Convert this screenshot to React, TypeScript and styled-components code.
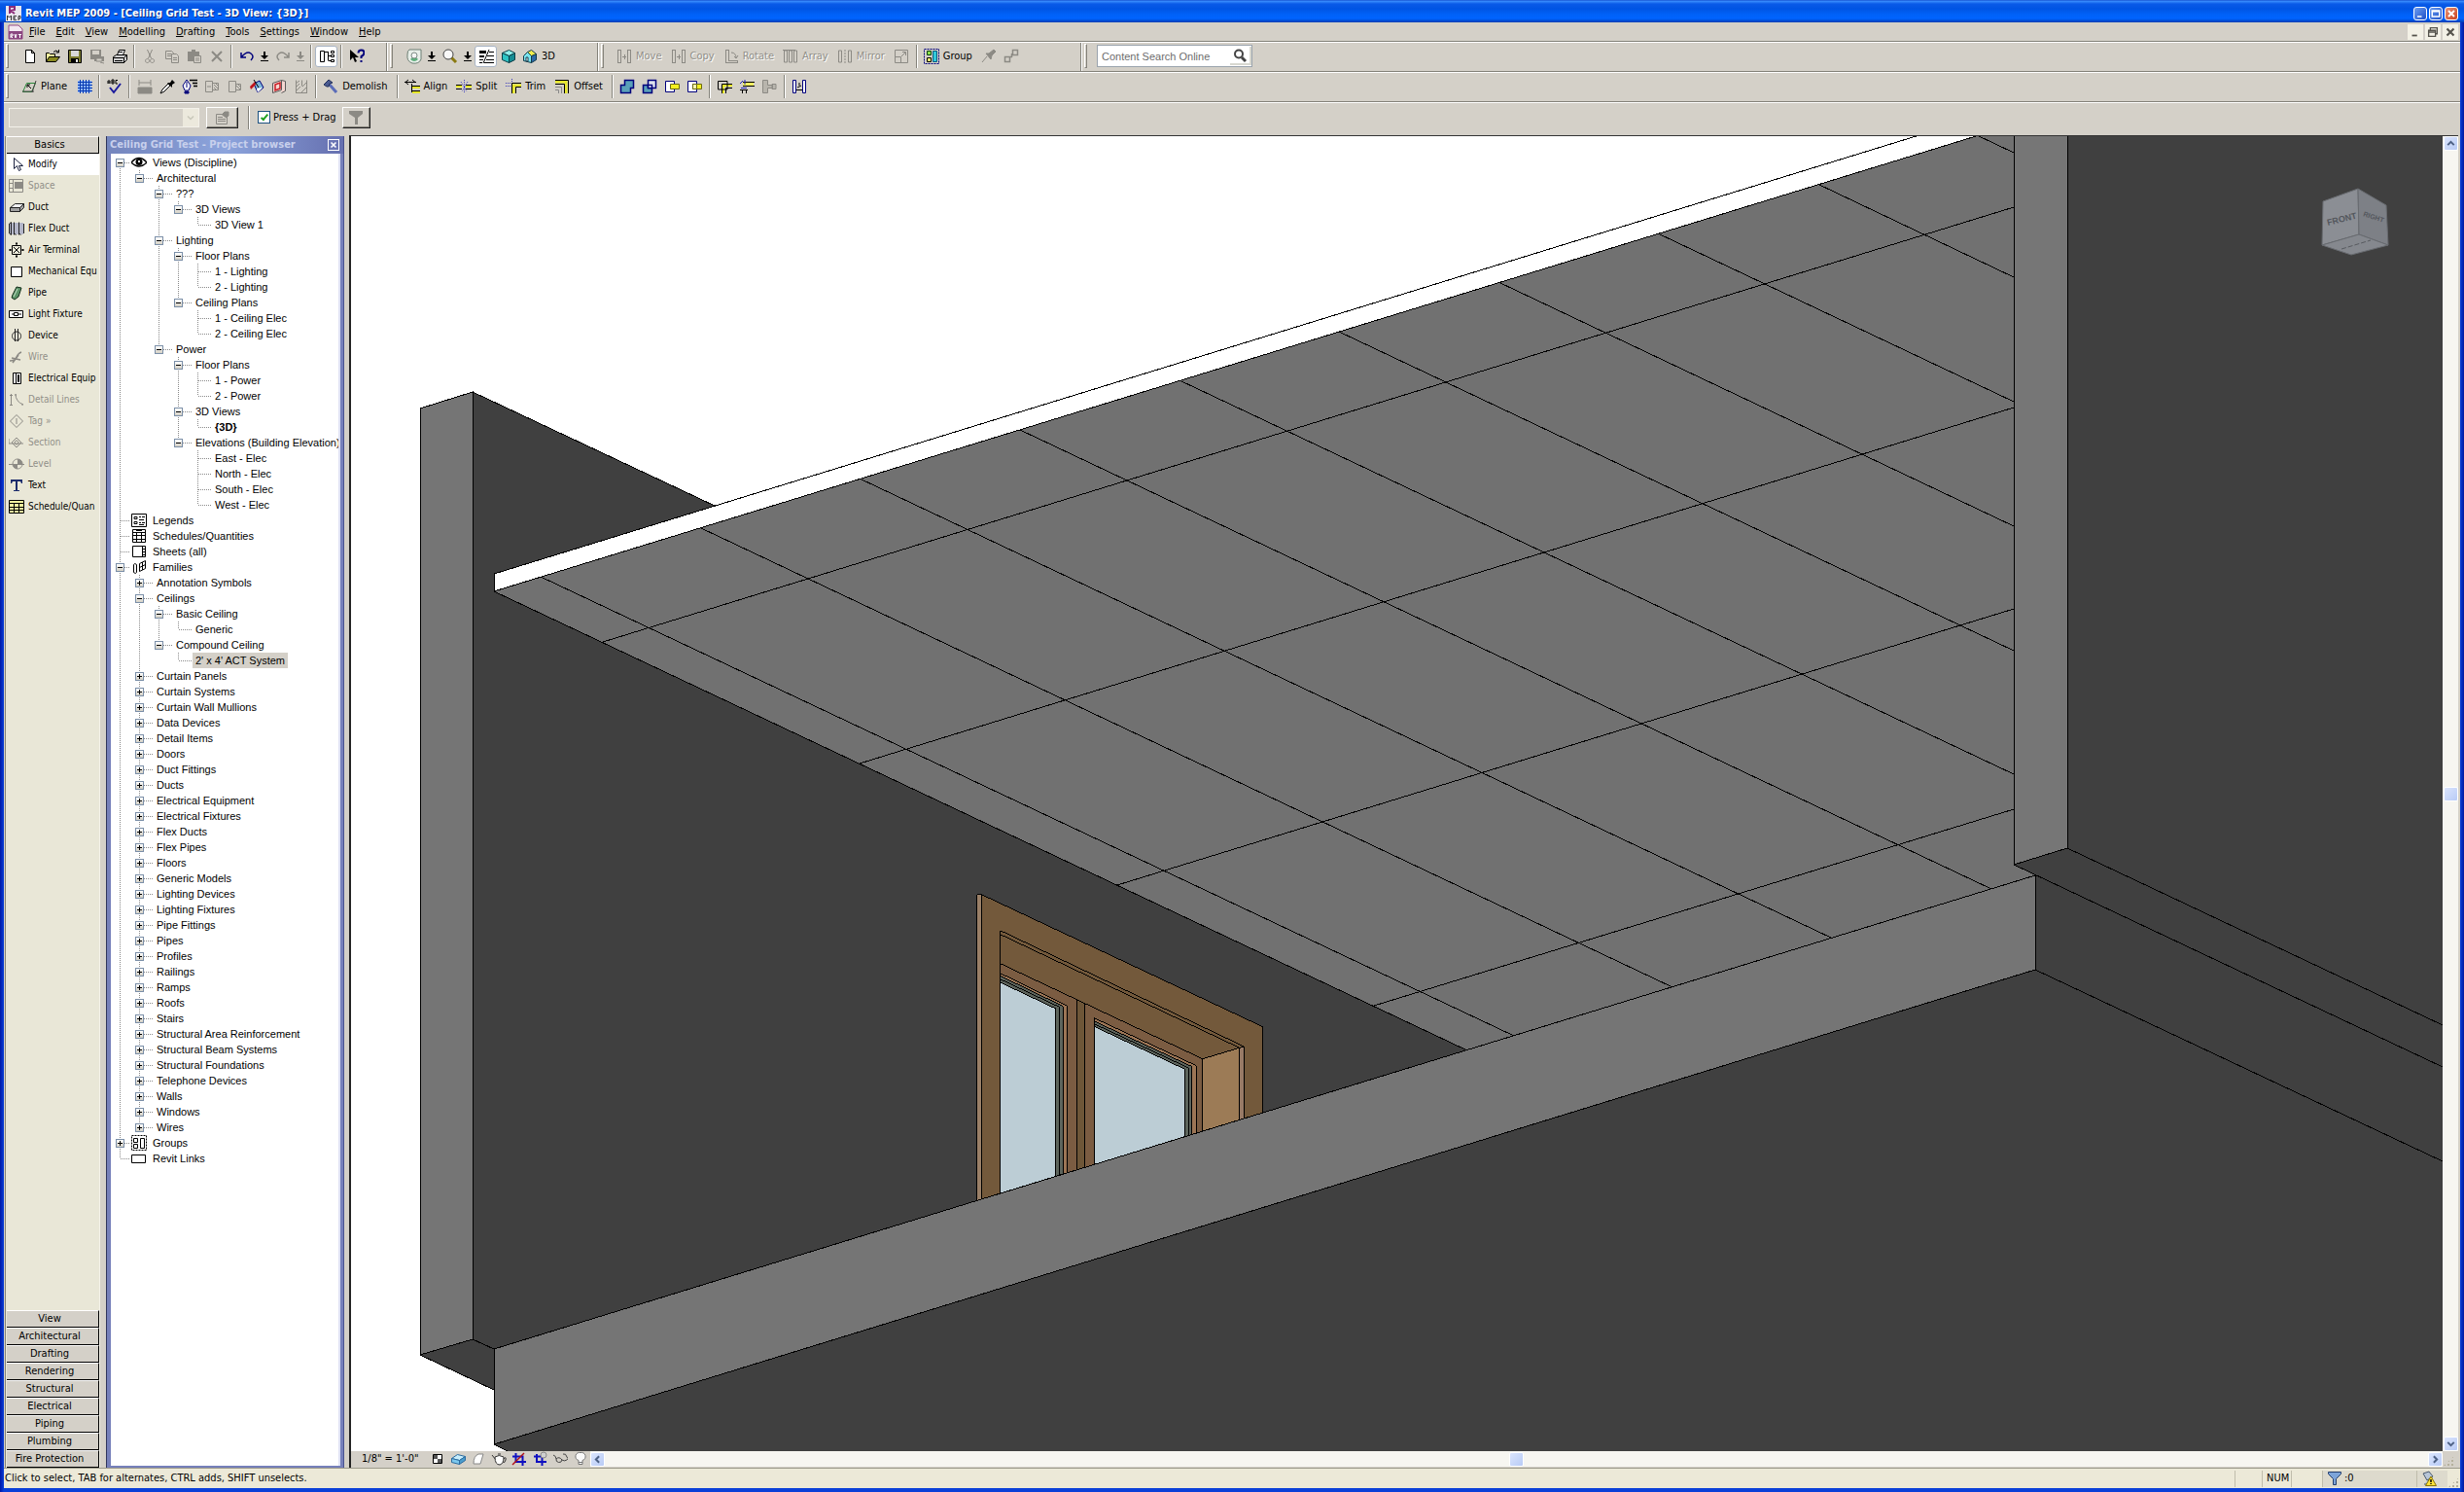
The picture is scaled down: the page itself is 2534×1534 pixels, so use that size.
import React from 'react';
import styled, { createGlobalStyle, css } from 'styled-components';

const face = '#d4d0c8';
const cream = '#ece9d8';
const uiFont = '"DejaVu Sans Condensed", "DejaVu Sans", Tahoma, sans-serif';
const treeFont = '"Liberation Sans", Arial, sans-serif';

const GlobalStyle = createGlobalStyle`
  *, *::before, *::after { box-sizing: border-box; }
  html, body, #root { height: 100%; margin: 0; }
  body { font: 11px/16px ${uiFont}; color: #000; overflow: hidden; background: #0a1a6a; }
  button, input, select { font: inherit; color: inherit; margin: 0; padding: 0; border: 0; border-radius: 0; background: none; }
  ul { list-style: none; margin: 0; padding: 0; }
  svg { display: block; flex: none; }
`;

/* ---------- icons ---------- */

const G = '#8c8a84';
const N = '#00007b';

const Move = (
  <g fill="none" stroke={G}>
    <path d="M1.5 1v13M4.5 1v13M1 1.5h4M1 14.5h4M11.5 1v13M14.5 1v13M11 1.5h4M11 14.5h4M6 8.5h4M8.5 6v5" />
  </g>
);
const Drop = <path fill="#000" d="M7 3h2v4h3L8 11 4 7h3zM4 12h8v1H4z" />;
const DropOff = <path fill={G} d="M7 3h2v4h3L8 11 4 7h3zM4 12h8v1H4z" />;

const icons: Record<string, React.ReactNode> = {
  mep: (
    <>
      <rect width="16" height="16" fill="#e9e6ee" />
      <path d="M4 8V1h5v3l-4 1 4 3" fill="none" stroke="#8b2d7a" strokeWidth="2" />
      <path d="M0 9h16v7H0z" fill="#e9e6ee" />
      <path d="M1.500 15v-5l2 2 2-2v5M11 10.500H8v4h3M8 12.500h2M13 15v-4.500h2v2.500h-2" fill="none" stroke="#333" />
    </>
  ),
  rvt: (
    <>
      <path d="M1 1h10l4 4v10H1z" fill="#f3e8f1" stroke="#9a4d8b" />
      <path d="M1 7h14v8H1z" fill="#8b4780" />
      <path d="M3 14v-4h2v2H3l2 2M7 10l1 4 1-4M11 10.500h3M12.500 10v4" fill="none" stroke="#fff" />
    </>
  ),
  fresh: <path d="M3.500 1.500h6l3 3v10h-9zM9.500 1.500v3h3" fill="#fff" stroke="#000" />,
  open: (
    <>
      <path d="M1.500 13.500v-9h3l1 1h5v3" fill="#fbf7a0" stroke="#000" />
      <path d="M1.500 13.500l3-5h11l-4 5z" fill="#8a8a20" stroke="#000" />
      <path d="M9 3.500q3-3 5 0M14.500 1v3h-3" fill="none" stroke="#000" />
    </>
  ),
  save: (
    <>
      <path d="M1.500 1.500h13v13h-13z" fill="#7b7b30" stroke="#000" />
      <path d="M4 2h8v6H4z" fill="#d8d8d8" />
      <path d="M4 10h8v4H4z" fill="#000" />
      <path d="M9 11h2v3H9z" fill="#fff" />
    </>
  ),
  saveoff: (
    <>
      <path d="M1 1h11v10H1z" fill={G} />
      <path d="M3 2h7v4H3z" fill={face} />
      <path d="M5 8h10v5H5z" fill={G} />
      <path d="M7 10h6v3H7zM11 14l4 1" fill={face} stroke={G} />
    </>
  ),
  print: (
    <>
      <path d="M5.500 6.500l2-5h6l-2 5z" fill="#fff" stroke="#000" />
      <path d="M1.500 8.500l3-2h11v5l-3 3h-11z" fill="#d0d0d0" stroke="#000" />
      <path d="M1.500 9.500h11v5M12.500 9.500l3-3M3 12.500h8M7 3.500h4" fill="none" stroke="#000" />
    </>
  ),
  cut: <path d="M5.500 1l4 9M10.500 1l-4 9M5.500 10.500a2 2 0 1 0 .1 0zM10.500 10.500a2 2 0 1 0 .1 0z" fill="none" stroke={G} />,
  copydoc: (
    <g fill={face} stroke={G}>
      <path d="M1.500 2.500h6l2 2v6h-8zM3 5.500h4M3 7.500h4" />
      <path d="M7.500 5.500h5l2 2v7h-7zM9 9.500h4M9 11.500h4" />
    </g>
  ),
  paste: (
    <>
      <path d="M1 3h12v10H1zM5 1h4v2H5z" fill={G} />
      <path d="M7.500 7.500h7v7h-7z" fill={face} stroke={G} />
      <path d="M9 10h4M9 12h4" stroke={G} />
    </>
  ),
  del: <path d="M3 3l10 10M13 3L3 13" stroke={G} strokeWidth="2" />,
  undo: <path d="M2 4v5h5M2.500 8.500Q8 2 12 5t0 7" fill="none" stroke={N} strokeWidth="1.500" />,
  redo: <path d="M14 4v5H9M13.500 8.500Q8 2 4 5t0 7" fill="none" stroke={G} strokeWidth="1.500" />,
  drop: Drop,
  dropoff: DropOff,
  browser: (
    <g fill="none" stroke="#000">
      <path d="M1.500 2.500h4v11h-4zM5.500 3.500h4M9.500 3v9M9.500 7.500h3M9.500 12.500h3" />
      <path d="M12.500 2.500h3v2h-3zM12.500 6.500h3v2h-3zM12.500 11.500h3v2h-3z" />
    </g>
  ),
  help: (
    <>
      <path d="M1 1v11l3-3 2 5 2-1-2-4h4z" fill="#000" />
      <path d="M9.500 4.500q0-3 3-3t3 2.500-3 4v2M12.500 12v2" fill="none" stroke={N} strokeWidth="2" />
    </>
  ),
  wheel: (
    <>
      <path d="M3 1h12v10q-2 5-9 4Q0 13 1 6q0-4 2-5z" fill="#e8efe9" stroke="#6d7f74" />
      <path d="M4 11q4 4 8 0l-2-2H6z" fill="#5fae7d" />
      <circle cx="8" cy="7" r="3" fill="#f4f6f4" stroke="#7d8a84" />
    </>
  ),
  zoom: (
    <>
      <path d="M9 9l5 5" stroke="#8a7a10" strokeWidth="3" />
      <circle cx="6" cy="6" r="5" fill="#f8f8f8" stroke="#444" />
    </>
  ),
  thin: (
    <>
      <path d="M1 2h7v3H1zM1 7h5v2H1zM1 11h4v1H1zM1 14h3v1H1z" fill="#000" />
      <path d="M11 1L5 15M11 3.500h5M9 7.500h7M8 11.500h8M6 14.500h10" stroke="#000" />
    </>
  ),
  cube: (
    <g stroke="#0b3e48">
      <path d="M1.500 4.500l7-3 6 3-6 3z" fill="#8ff0ec" />
      <path d="M1.500 4.500l7 3v7l-7-3z" fill="#2cc4c4" />
      <path d="M8.500 7.500l6-3v7l-6 3z" fill="#158c93" />
    </g>
  ),
  house: (
    <g stroke="#123a4a">
      <path d="M1.500 7.500l4-4 4 4v7l-8-2z" fill="#7be3ee" />
      <path d="M9.500 7.500l5-2v6l-5 3z" fill="#2d6aa8" />
      <path d="M5.500 3.500l4-2 5 4-5 2z" fill="#f2ee4c" />
      <path d="M4 9h2v4H4z" fill="#fff" />
    </g>
  ),
  move: Move,
  copy: Move,
  rotate: <path d="M2.500 1v13M5.500 1v11M2 1.500h4M2 14.500h12M5 12.500h9M14.500 12v3M8 4q5 0 5 6M11 8l2 2 2-3" fill="none" stroke={G} />,
  array: <path d="M1.500 2v12h3V2zM6.500 2v12h3V2zM11.500 2v12h3V2zM0 1.500h13" fill="none" stroke={G} />,
  mirror: <path d="M1.500 2v12h3V2zM11.500 2v12h3V2zM8 1v2M8 4v2M8 7v2M8 10v2M8 13v2" fill="none" stroke={G} />,
  resize: <path d="M1.500 1.500h13v13h-13zM1.500 8.500h6v6M8 8l4-4M9 3.500h3.500V7" fill="none" stroke={G} />,
  group: (
    <>
      <path d="M.5.500h15v15H.5z" fill="none" stroke={N} strokeDasharray="2 1" />
      <path d="M3.500 2.500h4v4h-4z" fill="#8be04a" stroke="#0a4010" />
      <path d="M3.500 9.500h4v4h-4z" fill="#f4f070" stroke="#000" />
      <path d="M9.500 2.500h4v11h-4z" fill="#32c8d8" stroke="#085a80" />
    </>
  ),
  pin: <path d="M13 1l-5 4-3 0 5 6 1-4 4-4zM6 8l-5 6" fill={G} stroke={G} />,
  link: <path d="M1.500 8.500h5v5h-5zM9.500 1.500h5v5h-5zM6 8.500h3M8.500 5v4" fill="none" stroke={G} strokeWidth="1.500" />,
  plane: (
    <>
      <path d="M1.500 13.500l4-9h9l-4 9z" fill="none" stroke="#2a8a3a" />
      <path d="M1 13h12M15 2l-4 12" stroke="#444" fill="none" />
      <path d="M6 6l4 4M6 9V6h3" stroke="#000" fill="none" />
    </>
  ),
  grid: (
    <>
      <path d="M1 2h14v12H1z" fill="#8fb6ff" />
      <path d="M1 3.500h15M1 6.500h15M1 9.500h15M1 12.500h15M3.500 1v14M6.500 1v14M9.500 1v14M12.500 1v14" stroke="#0a3cb0" />
    </>
  ),
  spell: (
    <>
      <path d="M1 5V2h2v3M1 4h2M5 5V1h2v4zM5 3h2M11 1.500H9V5h2" fill="none" stroke="#000" />
      <path d="M3 9l4 5 7-9" fill="none" stroke="#1a1a9c" strokeWidth="2" />
    </>
  ),
  tape: <path d="M1 9h14v6H1zM2 1v6M14 1v6M2 4h12" fill={G} stroke={G} />,
  dropper: (
    <>
      <path d="M1 15l2-4 6-6 2 2-6 6z" fill="#fff" stroke="#000" />
      <path d="M8 4l3 0 2-3 3 3-3 2 0 3z" fill="#000" />
    </>
  ),
  paintpen: (
    <>
      <path d="M5 1l4 6-2 5H3L1 7z" fill="#fff" stroke={N} />
      <path d="M5 3v6M3 13h4v2H3z" stroke={N} fill={N} />
      <path d="M8 1.500h8M11 4.500h5M12 7.500h4" stroke="#000" strokeWidth="1.500" />
    </>
  ),
  split1: <path d="M1.500 2.500h7v11h-7zM8.500 4.500h6v7h-6zM3 8h4M10 6l4 4M10 9l2 2M12 5l3 3" fill="none" stroke={G} />,
  split2: <path d="M2.500 2.500h7v11h-7zM9.500 5.500h5v6h-5zM10 7l4 4M11 5l4 4" fill="none" stroke={G} />,
  bucket: (
    <>
      <path d="M5 5l6-3 4 7-6 5z" fill="#7fb6d8" stroke={N} />
      <path d="M8 10l6-1-5 5z" fill="#fff" />
      <path d="M1 8l5-5 1 3-5 5z" fill="#c0141c" />
      <path d="M5 1l5 8" stroke="#000" />
    </>
  ),
  redbox: (
    <>
      <path d="M1.500 4.500l9-3v10l-9 3zM10.500 1.500l4 1v10l-4 2" fill="#f4d6d0" stroke="#5a5a5a" />
      <path d="M4 6l5-2v6l-5 2z" fill="none" stroke="#c81c24" strokeWidth="1.500" />
    </>
  ),
  hatch: <path d="M2.500 1.500v13M8.500 1.500v6M13.500 1.500v13M2 5l4-3M2 9l4-4M2 13l5-5M8 14l5-5M9 8l4-4M2 14.500h12" fill="none" stroke={G} />,
  hammer: (
    <>
      <path d="M6 5l8 9" stroke="#5a6cb8" strokeWidth="3" />
      <path d="M1 6l5-5 4 3-3 1-1 3-2 0z" fill="#4a5a90" stroke="#22305a" />
    </>
  ),
  align: (
    <>
      <path d="M0 3.500h12M4 1l-3 2.500L4 6M8 1l3 2.500M7.500 5v9" fill="none" stroke="#000" />
      <path d="M8 8h8v2H8zM8 13h8v2H8z" fill="#e6e62a" />
      <path d="M7 7.500h9M7 12.500h9" stroke="#000" />
    </>
  ),
  cutline: (
    <>
      <path d="M0 7h6v2H0zM10 7h6v2h-6z" fill="#e6e62a" />
      <path d="M0 6.500h6M0 10.500h6M10 6.500h6M10 10.500h6" stroke="#000" />
      <path d="M8.500 1v14M5 3l6 10M12 3L6 13" stroke="#4040c0" strokeDasharray="1 1" />
    </>
  ),
  trim: (
    <>
      <path d="M0 4.500h7M6.500 0v6M0 7.500h5" stroke="#3a3ab8" strokeDasharray="1 1" fill="none" />
      <path d="M8 15V7h8" fill="none" stroke="#e6e62a" strokeWidth="3" />
      <path d="M6.500 15V4.500H16M10.500 15V8.500H16" fill="none" stroke="#000" />
    </>
  ),
  offset: (
    <>
      <path d="M1 3h11v12" fill="none" stroke="#e6e62a" strokeWidth="3" />
      <path d="M1 1.500h13.500V15M1 5.500h9.500V15" fill="none" stroke="#000" />
      <path d="M1 8.500h6.500V15M1 11.500h3.500V15" fill="none" stroke="#888" />
    </>
  ),
  join: <path d="M5.500 1.500h9v8h-3v5h-10v-8h4z" fill="#5aa0b8" stroke={N} strokeWidth="1.500" />,
  unjoin: (
    <g stroke={N} strokeWidth="1.500">
      <path d="M1.500 6.500h9v8h-9z" fill="#5aa0b8" />
      <path d="M6.500 1.500h8v8h-8z" fill="#dfe3ee" />
      <path d="M6.500 6.500h4v3h-4z" fill="#fff" />
    </g>
  ),
  cutgeo: (
    <>
      <path d="M1.500 2.500h9v11h-9z" fill="#fff" stroke={N} />
      <path d="M6.500 5.500h9v5h-9z" fill="#f4f020" stroke="#6a6a10" />
    </>
  ),
  uncutgeo: (
    <>
      <path d="M1.500 2.500h9v11h-9z" fill="#fff" stroke={N} />
      <path d="M6.500 5.500h9v5h-9z" fill="#f4f020" stroke="#6a6a10" />
      <path d="M6.500 5.500h4v5h-4z" fill="#fbf8b0" stroke="#6a6a10" />
    </>
  ),
  corner: (
    <>
      <path d="M7 15V7h9" stroke="#e6e62a" strokeWidth="2" fill="none" />
      <path d="M1.500 11V2.500H11V11zM5.500 15V5.500H16M9.500 15V9.500H16" fill="none" stroke="#000" />
    </>
  ),
  beams: (
    <>
      <path d="M4 4h11v4H4z" fill="#f4f060" />
      <path d="M4 3.500h12M4 7.500h12M1 11.500h8M3.500 11v4M7.500 11v4" stroke="#000" />
      <path d="M6 1v5M2 9.500h6M1 5l3-3" stroke="#2020b8" fill="none" />
    </>
  ),
  wallend: <path d="M1.500 1.500h5v5h5v3h-5v5h-5zM11 5.500h4v5h-4z" fill="#b8b5ad" stroke={G} />,
  dims: (
    <>
      <path d="M1.500 1.500h3v13h-3zM11.500 1.500h3v13h-3z" fill="#fff" stroke={N} />
      <path d="M5 11.500h6M8 4v3M6 9l4-2" stroke="#000" />
    </>
  ),
  props: (
    <g fill="none" stroke={G}>
      <path d="M1.500 4.500h11v10h-11zM3 7.500h5M3 9.500h8M3 11.500h8" />
      <path d="M7 5l3-3h4v4l-3 2" fill={G} />
    </g>
  ),
  funnel: <path d="M1 1h14v3l-5 4v7H7V8L1 4z" fill={G} />,
  bluefunnel: <path d="M1.500 1.500h13v2l-5 5v6h-3v-6l-5-5z" fill="#7da4d8" stroke="#26406e" />,
  arrow: <path d="M5.500 1.500v11l3-3 2 5 2-1-2-4h4z" fill="#fff" stroke="#1c2340" />,
  space: (
    <>
      <path d="M.5 1.500h14v13H.5zM4.500 2v12M1 5.500h3M1 10.500h3" fill="none" stroke={G} />
      <path d="M6 4h8v7H6z" fill={G} />
    </>
  ),
  duct: (
    <g stroke="#222">
      <path d="M1.500 8.500l5-4h9l-4 4z" fill="#f0f0f0" />
      <path d="M1.500 8.500h10v4h-10zM11.500 8.500l4-4v4l-4 4z" fill="#a0a0a0" />
    </g>
  ),
  flex: (
    <>
      <path d="M1 2h14v12H1z" fill="#b4b6c8" />
      <path d="M.5 3v10l2 1.500V1.500L.5 3M5.500 3v10l2 1.500M5.500 1.500v13M10.500 3v10l2 1.500M10.500 1.500v13M15.500 3v10" fill="none" stroke="#222" />
    </>
  ),
  terminal: <path d="M3.500 3.500h9v9h-9zM5 5l6 6M11 5l-6 6M7 1.500h2M7 14.500h2M1.500 7v2M14.500 7v2M8 0v3M8 13v3M0 8h3M13 8h3" fill="none" stroke="#000" />,
  box: <path d="M2.500 3.500h11v10h-11z" fill="#fff" stroke="#000" />,
  pipe: (
    <>
      <path d="M4 10l4-8 5 1-3 9-4 3-3-2z" fill="#5c9468" stroke="#15301c" />
      <path d="M5 12l4-8" stroke="#c6e0c8" />
    </>
  ),
  light: <path d="M.5 4.500h14v7H.5zM5.500 6.500h4v3h-4zM3 8h2M10 8h3" fill="#fff" stroke="#000" />,
  device: <path d="M8 4a4.500 4.500 0 1 0 .1 0zM6.500 1v13M9.500 1v13" fill="none" stroke="#222" />,
  wire: <path d="M1 12q5 0 7-4t5-5M4 14l6-8M3 9l9 2" fill="none" stroke={G} strokeWidth="1.500" />,
  panel: <path d="M4.500 2.500h8v11h-8zM7.500 2.500v11M9.500 4.500h1v7h-1z" fill="#fff" stroke="#000" />,
  detail: <path d="M2.500 2v12M1 3.500h3M1 13.500h3M7 2q0 8 8 11M7 2v2M13 13h2" fill="none" stroke={G} />,
  tag: <path d="M8 1.500L14.500 8 8 14.500 1.500 8zM8 5v6" fill="none" stroke={G} />,
  section: <path d="M0 4v5h15M8 3l5 5-5 5-5-5zM8 6a2 2 0 1 0 .1 0z" fill="none" stroke={G} />,
  level: (
    <>
      <path d="M0 8.500h16M9 3a5 5 0 1 0 .1 0z" fill="none" stroke={G} />
      <path d="M9 8V3q5 0 5 5zM9 8v5q-5 0-5-5z" fill={G} />
    </>
  ),
  text: <path d="M2 2h12v4h-1l-1-2H9v9h2v1H5v-1h2V4H4L3 6H2z" fill="#1c2c6c" />,
  schedule: (
    <>
      <path d="M1 2h14v12H1z" fill="#f4f4a0" />
      <path d="M.5 1.500h15v13H.5zM1 4.500h14M1 8.500h14M1 11.500h14M5.500 5v10M10.500 5v10" fill="none" stroke="#000" />
    </>
  ),
  eye: (
    <>
      <path d="M0 8q8-9 16 0-8 8-16 0z" fill="#fff" stroke="#000" strokeWidth="1.500" />
      <circle cx="8" cy="7.500" r="3.500" fill="#000" />
      <path d="M7 6h2v2H7z" fill="#fff" />
    </>
  ),
  legends: <path d="M.5 1.500h15v13H.5zM3 4.500h3v2H3zM3 9.500h3v2H3zM8 4.500h2M11 4.500h3M8 7.500h5M8 10.500h2M11 10.500h3M8 12.500h5" fill="#fff" stroke="#000" />,
  tables: <path d="M1.500 1.500h13v13h-13zM2 4.500h12M2 7.500h12M2 11.500h12M5.500 5v10M10.500 5v10M5 2.500h6" fill="#fff" stroke="#000" />,
  sheets: <path d="M1.500 2.500h13v11h-13zM11.500 3v10M12 5.500h2M12 8.500h2M12 11.500h2" fill="#fff" stroke="#000" />,
  families: <path d="M2.500 5.500q1-2 3 0v8q-1 2-3 0zM8.500 4.500l6-3v8l-6 3zM11.500 3v8M8.500 8.500l6-3" fill="#fff" stroke="#000" />,
  groups: (
    <g fill="none" stroke="#000">
      <path d="M.5.500h15v15H.5z" strokeDasharray="2 1" />
      <path d="M2.500 3.500h4v4h-4zM2.500 9.500h4v4h-4zM9.500 3.500h4v10h-4z" />
    </g>
  ),
  links: <path d="M.5 4.500h14v8H.5z" fill="#fff" stroke="#000" />,
  detaillevel: (
    <>
      <path d="M3.500 3.500h9v9h-9z" fill="#fff" stroke="#000" />
      <path d="M4 4h4v4H4zM8 8h4v4H8z" fill="#555" />
    </>
  ),
  shaded: (
    <g stroke="#2c6ca0">
      <path d="M1.500 7.500l6-4 8 2-6 4z" fill="#c8eefc" />
      <path d="M1.500 7.500l8 2v4l-8-2z" fill="#7cc8ee" />
      <path d="M9.500 9.500l6-4v4l-6 4z" fill="#4a9ccc" />
    </g>
  ),
  shadow: <path d="M3 13q0-8 5-10h5l-3 10z" fill="#fff" stroke="#888" />,
  teapot: (
    <>
      <path d="M1 4l4 5M13 8q3-3 2 1t-3 2" fill="none" stroke="#333" />
      <path d="M4 6q4-3 9 0 0 7-4 8-5 0-5-8zM7 3h3" fill="#fff" stroke="#333" />
    </>
  ),
  crop: (
    <>
      <path d="M4.500 2v9H15M1 5.500h10.500V15" fill="none" stroke="#1010c0" strokeWidth="2" />
      <path d="M1 14L13 2" stroke="#b01018" strokeWidth="1.500" />
    </>
  ),
  cropshow: (
    <>
      <path d="M5 3v8h10M2 5.500h8.500V15" fill="none" stroke="#1010c0" strokeWidth="2" />
      <circle cx="12" cy="4" r="3" fill="#cfcfcf" stroke="#888" />
    </>
  ),
  glasses: <path d="M1 4q3 1 3 4a3 3 0 0 0 6 1 3 2 0 1 0 5-3q-1-4-4-3M4 8q3-3 6 1" fill="none" stroke="#444" />,
  bulb: <path d="M8 1.500a4 4 0 0 1 2 8v4H6v-4a4 4 0 0 1 2-8zM6 11.500h4" fill="#fafafa" stroke="#777" />,
  comm: (
    <>
      <path d="M2 3l6-2 4 5-6 4zM3 14h6l-2-5" fill="#b8c6d8" stroke="#4a5a70" />
      <path d="M10 6l5.500 9.500h-11z" fill="#ffe23a" stroke="#8a7400" />
      <path d="M10 9v3M10 13v1" stroke="#000" strokeWidth="1.500" />
    </>
  ),
  search: (
    <>
      <circle cx="7" cy="6.500" r="4" fill="none" stroke="#444" strokeWidth="2" />
      <path d="M10 10l4 4" stroke="#444" strokeWidth="3" />
    </>
  ),
  min: <path d="M4 11h6v2H4z" fill="currentColor" />,
  max: <path d="M3 4h10v8H3zM3 5h10" fill="none" stroke="currentColor" strokeWidth="2" />,
  restore: <path d="M5 5V3h8v7h-2M3 6h8v7H3zM3 8h8" fill="none" stroke="currentColor" strokeWidth="1.500" />,
  close: <path d="M4 4l8 8M12 4l-8 8" stroke="currentColor" strokeWidth="2.500" />,
  up: <path d="M4 10l4-4 4 4" fill="none" stroke="#4d6185" strokeWidth="2.500" />,
  down: <path d="M4 6l4 4 4-4" fill="none" stroke="#4d6185" strokeWidth="2.500" />,
  left: <path d="M10 4L6 8l4 4" fill="none" stroke="#4d6185" strokeWidth="2.500" />,
  right: <path d="M6 4l4 4-4 4" fill="none" stroke="#4d6185" strokeWidth="2.500" />,
  chev: <path d="M4 6l4 4 4-4" fill="none" stroke="#c9c7ba" strokeWidth="2" />,
};

const Icon = ({ name, size = 16 }: { name: string; size?: number }) => (
  <svg width={size} height={size} viewBox="0 0 16 16" aria-hidden="true">
    {icons[name]}
  </svg>
);

/* ---------- window frame ---------- */

const Frame = styled.div`
  height: 100vh;
  display: flex;
  flex-direction: column;
  padding: 0 4px 4px;
  background: linear-gradient(to right, #0018a8 0, #0a3fd8 4px, #0a3fd8 calc(100% - 4px), #0018a0 100%);
`;

const TitleBar = styled.header`
  display: flex;
  align-items: center;
  gap: 4px;
  height: 23px;
  margin: 0 -4px;
  padding: 4px 6px 0;
  background: linear-gradient(#0a3cc0 0, #3c90ff 1px, #0a5ae8 4px, #0054e3 9px, #0062f8 15px, #0064ff 19px, #0046c8 22px, #003cb0 23px);
  color: #fff;
  font: bold 11px/16px ${uiFont};
`;

const TitleText = styled.h1`
  flex: 1;
  margin: 0;
  font: inherit;
  text-shadow: 1px 1px 0 #0a2a80;
`;

const WinButtons = styled.div`
  display: flex;
  gap: 2px;
`;

const WinButton = styled.button<{ $red?: boolean }>`
  display: grid;
  place-items: center;
  width: 14px;
  height: 14px;
  border: 1px solid #fff;
  border-radius: 3px;
  color: #fff;
  background: ${(p) => (p.$red ? 'linear-gradient(135deg, #e89478, #c8401c)' : 'linear-gradient(135deg, #6c9cf0, #1c50c8)')};
`;

const MenuBar = styled.nav`
  display: flex;
  align-items: center;
  height: 20px;
  padding: 0 2px 0 4px;
  background: ${face};
  border-bottom: 1px solid #84827a;
`;

const MenuItem = styled.button`
  margin-left: 11px;
  &:first-of-type { margin-left: 6px; }
`;

const MdiButtons = styled.div`
  display: flex;
  gap: 2px;
  margin-left: auto;
`;

const MdiButton = styled.button`
  display: grid;
  place-items: center;
  width: 16px;
  height: 16px;
  color: #55534c;
  background: #f3f1e6;
`;

/* ---------- toolbars ---------- */

const ToolbarRow = styled.div`
  display: flex;
  height: 31px;
  background: ${face};
  border-top: 1px solid #fff;
  border-bottom: 1px solid #84827a;
`;

const Band = styled.div<{ $w?: number }>`
  display: flex;
  align-items: center;
  flex: ${(p) => (p.$w ? `0 0 ${p.$w}px` : '1')};
  padding: 0 0 2px 2px;
  & + & { border-left: 1px solid #fff; box-shadow: -1px 0 0 #84827a; }
`;

const Gripper = styled.span`
  width: 3px;
  height: 25px;
  margin-right: 10px;
  border: 1px solid;
  border-color: #fff #84827a #84827a #fff;
`;

const ToolButton = styled.button<{ $narrow?: boolean; $on?: boolean }>`
  display: flex;
  align-items: center;
  justify-content: center;
  flex: none;
  width: ${(p) => (p.$narrow ? 14 : 23)}px;
  height: 22px;
  ${(p) => p.$on && css`background: #fff; border: 1px solid #a8b4c4; border-radius: 3px;`}
`;

const LabelButton = styled.button<{ $off?: boolean }>`
  display: flex;
  align-items: center;
  flex: none;
  height: 22px;
  gap: 4px;
  padding: 0 6px 0 3px;
  ${(p) => p.$off && css`color: #918f88; text-shadow: 1px 1px 0 #fff;`}
`;

const Sep = styled.span`
  flex: none;
  width: 2px;
  height: 24px;
  margin: 0 3px;
  border-left: 1px solid #84827a;
  border-right: 1px solid #fff;
`;

const OptionSep = styled(Sep)`
  margin: 0 8px 0 10px;
`;

const SearchForm = styled.form`
  display: flex;
  align-items: center;
  width: 160px;
  height: 23px;
  background: #fff;
  border: 1px solid #9aa3ad;
`;

const SearchInput = styled.input`
  flex: 1;
  min-width: 0;
  padding: 0 4px;
  font: 11px/16px ${treeFont};
  outline: 0;
  &::placeholder { color: #6d6d6d; opacity: 1; }
`;

const SearchButton = styled.button`
  display: grid;
  place-items: center;
  width: 22px;
  height: 19px;
  border-right: 2px solid #d8d8d0;
  border-bottom: 2px solid #d8d8d0;
`;

const OptionsBar = styled.div`
  display: flex;
  align-items: center;
  height: 34px;
  padding: 0 0 4px 5px;
  background: ${face};
  border-top: 1px solid #fff;
`;

const ComboWrap = styled.div`
  display: flex;
  align-items: center;
  width: 196px;
  height: 20px;
  margin-right: 7px;
  border: 1px solid #f3f1ea;
`;

const Combo = styled.select`
  flex: 1;
  height: 18px;
  appearance: none;
  opacity: 1;
`;

const ComboArrow = styled.span`
  width: 16px;
  height: 18px;
  display: grid;
  place-items: center;
  background: #ece9dd;
`;

const RaisedButton = styled.button<{ $w: number }>`
  display: grid;
  place-items: center;
  width: ${(p) => p.$w}px;
  height: 22px;
  border: 1px solid;
  border-color: #fff #222 #222 #fff;
  box-shadow: inset -1px -1px 0 #84827a;
`;

const CheckLabel = styled.label`
  display: flex;
  align-items: center;
  gap: 3px;
  margin-right: 6px;
`;

const Check = styled.input`
  appearance: none;
  width: 13px;
  height: 13px;
  border: 1px solid #1c5180;
  background: #fff;
  display: grid;
  place-items: center;
  &:checked::after {
    content: '';
    width: 4px;
    height: 8px;
    margin-bottom: 2px;
    border: solid #21a121;
    border-width: 0 2px 2px 0;
    rotate: 40deg;
  }
`;

/* ---------- work area ---------- */

const Work = styled.main`
  flex: 1;
  min-height: 0;
  display: flex;
  background: ${face};
`;

const Palette = styled.aside`
  display: flex;
  flex-direction: column;
  flex: 0 0 98px;
  min-width: 0;
  margin: 1px 0 0 1px;
  padding-left: 1px;
  background: #e9e7d7;
  border-left: 1px solid #84827a;
  border-right: 1px solid #f5f3ea;
`;

const PaletteTab = styled.button`
  height: 18px;
  flex: none;
  padding-right: 6px;
  text-align: center;
  background: ${face};
  border-top: 1px solid #fff;
  border-bottom: 1px solid #000;
  border-right: 1px solid #000;
  line-height: 14px;
`;

const PaletteTools = styled.ul`
  flex: 1;
  min-height: 0;
`;

const PaletteTool = styled.button<{ $on?: boolean; $off?: boolean }>`
  display: flex;
  align-items: center;
  gap: 4px;
  width: 100%;
  height: 22px;
  padding-left: 2px;
  font-size: 10px;
  white-space: nowrap;
  ${(p) => p.$on && css`background: #fff;`}
  ${(p) => p.$off && css`color: #918f88;`}
`;

const Browser = styled.section`
  display: flex;
  flex-direction: column;
  flex: 0 0 245px;
  min-width: 0;
  margin: 1px 5px 0 6px;
  padding: 0 3px 2px 4px;
  background: #7680ba;
  border-left: 1px solid #30365c;
  border-right: 1px solid #4a5290;
`;

const BrowserTitle = styled.div`
  display: flex;
  align-items: center;
  justify-content: space-between;
  height: 18px;
  flex: none;
  color: #c8d0ec;
  font: bold 11px/16px ${uiFont};
  background: linear-gradient(to right, #7485bd, #8ca4dc 50%, #6670b0);
  margin: 0 -3px 0 -4px;
  padding: 0 4px 0 3px;
`;

const BrowserClose = styled.button`
  display: grid;
  place-items: center;
  width: 12px;
  height: 12px;
  border: 1px solid #fff;
  color: #fff;
`;

const Tree = styled.ul`
  flex: 1;
  min-height: 0;
  overflow: hidden;
  background: #fff;
  padding-top: 1px;
  border-right: 2px solid #dfe2f4;
  font: 11px/16px ${treeFont};
`;

const TreeRow = styled.li`
  display: flex;
  height: 16px;
  white-space: nowrap;
`;

const dotsV = 'repeating-linear-gradient(to bottom, #8a8a8a 0 1px, transparent 1px 2px)';
const dotsH = 'repeating-linear-gradient(to right, #8a8a8a 0 1px, transparent 1px 2px)';

const Cell = styled.span<{ $up?: boolean; $down?: boolean; $across?: boolean }>`
  display: grid;
  place-items: center;
  flex: 0 0 20px;
  height: 16px;
  padding-right: 1px;
  background-repeat: no-repeat;
  background-image: ${dotsV}, ${dotsV}, ${dotsH};
  background-position: 9px 0, 9px 8px, 10px 8px;
  background-size: 1px ${(p) => (p.$up ? 8 : 0)}px, 1px ${(p) => (p.$down ? 8 : 0)}px, ${(p) => (p.$across ? 10 : 0)}px 1px;
`;

const Stub = styled.span`
  flex: 0 0 4px;
  background: ${dotsH} 0 8px / 4px 1px no-repeat;
`;

const Expander = styled.button<{ $plus?: boolean }>`
  width: 9px;
  height: 9px;
  border: 1px solid #7b8fa8;
  background:
    linear-gradient(#000, #000) center / 5px 1px no-repeat,
    linear-gradient(#000, #000) center / 1px ${(p) => (p.$plus ? 5 : 0)}px no-repeat,
    linear-gradient(#fff, #d4d0c4);
`;

const TreeIcon = styled.span`
  margin: 0 3px 0 1px;
`;

const TreeLabel = styled.span<{ $bold?: boolean; $sel?: boolean }>`
  padding: 0 3px;
  font-weight: ${(p) => (p.$bold ? 'bold' : 'normal')};
  background: ${(p) => (p.$sel ? face : 'transparent')};
`;

/* ---------- view ---------- */

const ViewPane = styled.section`
  flex: 1;
  min-width: 0;
  display: grid;
  grid-template: minmax(0, 1fr) 16px / minmax(0, 1fr) 16px;
  border-left: 2px solid #222;
  border-top: 1px solid #333;
  padding-bottom: 1px;
  margin-right: 2px;
`;

const Canvas = styled.svg`
  width: 100%;
  height: 100%;
  background: #fff;
`;

const Scroll = styled.div<{ $vertical?: boolean }>`
  display: flex;
  flex: 1;
  justify-content: space-between;
  align-items: center;
  flex-direction: ${(p) => (p.$vertical ? 'column' : 'row')};
  background: #f7f6f1;
`;

const ScrollPart = styled.button`
  display: grid;
  place-items: center;
  width: 15px;
  height: 15px;
  background: linear-gradient(135deg, #dbe5fd, #b8cbf6);
  border: 1px solid #fff;
  border-radius: 2px;
`;

const ViewFooter = styled.div`
  display: flex;
  background: ${face};
`;

const ViewControls = styled.div`
  display: flex;
  align-items: center;
  flex: 0 0 245px;
  padding-left: 11px;
`;

const Scale = styled.button`
  width: 67px;
  text-align: left;
`;

const ViewControl = styled.button`
  display: grid;
  place-items: center;
  width: 21px;
  height: 16px;
`;

const StatusBar = styled.footer`
  display: flex;
  align-items: center;
  height: 21px;
  padding-left: 1px;
  background: ${cream};
  border-top: 1px solid #9c9a8c;
`;

const StatusText = styled.span`
  flex: 1;
`;

const StatusPart = styled.span<{ $w: number; $dark?: boolean }>`
  display: flex;
  align-items: center;
  gap: 2px;
  width: ${(p) => p.$w}px;
  height: 17px;
  padding-left: 4px;
  border-left: 1px solid #c0bdac;
  background: ${(p) => (p.$dark ? '#dddacd' : 'transparent')};
`;

const SizeGrip = styled.span`
  width: 13px;
  height: 12px;
  align-self: end;
  background: radial-gradient(#b4b09c 1px, transparent 1px) 0 0 / 4px 4px;
  clip-path: polygon(100% 0, 100% 100%, 0 100%);
`;

/* ---------- data ---------- */

type Node = { t: string; icon?: string; open?: boolean; shut?: boolean; bold?: boolean; sel?: boolean; kids?: Node[] };
const leaf = (t: string): Node => ({ t });
const folder = (t: string, ...kids: Node[]): Node => ({ t, open: true, kids });
const closed = (t: string): Node => ({ t, shut: true });

const tree: Node[] = [
  {
    ...folder(
      'Views (Discipline)',
      folder(
        'Architectural',
        folder('???', folder('3D Views', leaf('3D View 1'))),
        folder(
          'Lighting',
          folder('Floor Plans', leaf('1 - Lighting'), leaf('2 - Lighting')),
          folder('Ceiling Plans', leaf('1 - Ceiling Elec'), leaf('2 - Ceiling Elec')),
        ),
        folder(
          'Power',
          folder('Floor Plans', leaf('1 - Power'), leaf('2 - Power')),
          folder('3D Views', { t: '{3D}', bold: true }),
          folder('Elevations (Building Elevation)', leaf('East - Elec'), leaf('North - Elec'), leaf('South - Elec'), leaf('West - Elec')),
        ),
      ),
    ),
    icon: 'eye',
  },
  { t: 'Legends', icon: 'legends' },
  { t: 'Schedules/Quantities', icon: 'tables' },
  { t: 'Sheets (all)', icon: 'sheets' },
  {
    ...folder(
      'Families',
      closed('Annotation Symbols'),
      folder('Ceilings', folder('Basic Ceiling', leaf('Generic')), folder('Compound Ceiling', { t: "2' x 4' ACT System", sel: true })),
      ...[
        'Curtain Panels', 'Curtain Systems', 'Curtain Wall Mullions', 'Data Devices', 'Detail Items', 'Doors', 'Duct Fittings', 'Ducts',
        'Electrical Equipment', 'Electrical Fixtures', 'Flex Ducts', 'Flex Pipes', 'Floors', 'Generic Models', 'Lighting Devices',
        'Lighting Fixtures', 'Pipe Fittings', 'Pipes', 'Profiles', 'Railings', 'Ramps', 'Roofs', 'Stairs', 'Structural Area Reinforcement',
        'Structural Beam Systems', 'Structural Foundations', 'Telephone Devices', 'Walls', 'Windows', 'Wires',
      ].map(closed),
    ),
    icon: 'families',
  },
  { ...closed('Groups'), icon: 'groups' },
  { t: 'Revit Links', icon: 'links' },
];

const TreeNodes = ({ nodes, guides = [] }: { nodes: Node[]; guides?: boolean[] }) => (
  <>
    {nodes.map((n, i) => {
      const more = i < nodes.length - 1;
      const top = guides.length === 0;
      return (
        <React.Fragment key={n.t + i}>
          <TreeRow>
            {guides.map((g, k) => (
              <Cell key={k} $up={g} $down={g} />
            ))}
            <Cell $up={!top || i > 0} $down={more} $across>
              {(n.open || n.shut) && <Expander $plus={n.shut} aria-label={(n.open ? 'Collapse ' : 'Expand ') + n.t} />}
            </Cell>
            {n.icon ? (
              <TreeIcon>
                <Icon name={n.icon} />
              </TreeIcon>
            ) : (
              <Stub />
            )}
            <TreeLabel $bold={n.bold} $sel={n.sel}>{n.t}</TreeLabel>
          </TreeRow>
          {n.kids && <TreeNodes nodes={n.kids} guides={[...guides, more]} />}
        </React.Fragment>
      );
    })}
  </>
);

/* Long names are abbreviated to fit the narrow palette. */
const paletteTools: [string, string, boolean?][] = [
  ['arrow', 'Modify'],
  ['space', 'Space', true],
  ['duct', 'Duct'],
  ['flex', 'Flex Duct'],
  ['terminal', 'Air Terminal'],
  ['box', 'Mechanical Equ'],
  ['pipe', 'Pipe'],
  ['light', 'Light Fixture'],
  ['device', 'Device'],
  ['wire', 'Wire', true],
  ['panel', 'Electrical Equip'],
  ['detail', 'Detail Lines', true],
  ['tag', 'Tag »', true],
  ['section', 'Section', true],
  ['level', 'Level', true],
  ['text', 'Text'],
  ['schedule', 'Schedule/Quan'],
];

/* A tool is "icon", "icon:Label", "!icon:Label" when unavailable, "+icon" when pressed, or "|" for a divider. */
const Tools = ({ items }: { items: string[] }) => (
  <>
    {items.map((item, i) => {
      if (item === '|') return <Sep key={i} />;
      const off = item[0] === '!';
      const on = item[0] === '+';
      const [name, label] = item.replace(/^[!+]/, '').split(':');
      if (label)
        return (
          <LabelButton key={i} $off={off} disabled={off}>
            <Icon name={name} />
            {label}
          </LabelButton>
        );
      return (
        <ToolButton key={i} $narrow={name === 'drop' || name === 'dropoff'} $on={on} aria-label={name}>
          <Icon name={name} />
        </ToolButton>
      );
    })}
  </>
);

/* ---------- 3D scene, in window coordinates ---------- */

const gridDown = [
  [556, 593, 1557, 1065], [721, 543, 1720, 1015], [884, 492, 1885, 965], [1049, 442, 2048, 914], [1213, 391, 2071, 796],
  [1377, 341, 2071, 669], [1541, 290, 2071, 541], [1705, 240, 2071, 413], [1869, 189, 2071, 285], [2033, 139, 2071, 157],
];
const gridUp = [
  [620, 660, 2071, 213], [884, 785, 2071, 419], [1149, 910, 2071, 626], [1413, 1034, 2071, 832],
];

const Line = ({ p }: { p: number[] }) => <path d={`M${p[0]} ${p[1]}L${p[2]} ${p[3]}`} />;

const Scene = () => (
  <Canvas viewBox="361 140 2151 1352" preserveAspectRatio="xMinYMin slice" role="img" aria-label="3D view of a ceiling grid" shapeRendering="crispEdges">
    <g stroke="#000">
      <path fill="#404040" d="M486 403L735 520 1600 520 2126 100H2600V1600H700L508 1485V1429L486 1377z" />
      <path fill="#fff" stroke="none" d="M735 520L1970 140 2000 100H700z" />
      <path fill="none" d="M486 403L735 520" />
      <path fill="#404040" d="M432 1393L486 1377 508 1387V1429z" />
      <path fill="#757575" d="M432 420L486 403V1377L432 1393z" />
      <path fill="#fff" d="M508 590L2120 94V113L508 608z" />
      <path fill="#717171" d="M508 608L2120 113V905L1509 1080z" />
      {gridDown.map((p, i) => <Line key={i} p={p} />)}
      {gridUp.map((p, i) => <Line key={i} p={p} />)}
      <path fill="#404040" stroke="none" d="M2071 889L2093 900V1000H2600V800H2071z" />
      <path fill="#767676" d="M2071 100H2126V872L2071 889z" />
      <path fill="none" d="M2126 872L2512 1054M2071 889L2512 1097M2093 997L2512 1194" />
    </g>
    <g transform="translate(980 900) scale(.33333)" stroke="#000" strokeWidth="3">
      <path fill="#73593b" d="M75 60L90 60 956 467V740L75 1010z" />
      <path fill="#9a8068" d="M75 60H90V1005H75z" />
      <path fill="#73593b" d="M146 170L898 528V760L146 990z" />
      <path fill="none" d="M146 182L884 532" />
      <path fill="#7b5c42" d="M146 272L770 566V800L146 990z" />
      <path fill="#9c7b56" d="M770 566L884 532V790H770z" />
      <path fill="#987a66" d="M884 532L898 528V790H884z" />
      <path fill="#9c7555" d="M146 302L352 402V940H146z" />
      <path fill="#5d645c" d="M146 310L340 404V940H146z" />
      <path fill="none" d="M146 320L328 406V940" />
      <path fill="#bccdd5" d="M146 330L317 411V940L146 985z" />
      <path fill="#6e5638" d="M382 383L406 395V925H382z" />
      <path fill="#9c7555" d="M436 440L751 587V810L436 900z" />
      <path fill="#5d645c" d="M436 450L738 590V810L436 900z" />
      <path fill="none" d="M436 458L727 594V810" />
      <path fill="#bccdd5" d="M436 466L716 598V812L436 895z" />
    </g>
    <path fill="#757575" stroke="#000" d="M508 1387L2093 900V997L508 1485z" />
    <path fill="#fff" stroke="none" d="M500 1481L508 1485 530 1496H500z" />
    <path stroke="#000" d="M508 1485L526 1494" />
    <g stroke="#686b70" shapeRendering="auto">
      <path fill="#8b8e94" d="M2389 207L2425 194 2426 241 2388 252z" />
      <path fill="#7d8086" d="M2425 194L2454 211 2456 252 2426 241z" />
      <path fill="#85888e" d="M2388 252L2426 241 2456 252 2418 262z" />
      <path fill="none" stroke="#585b60" strokeDasharray="5 2" d="M2408 256L2438 247" />
    </g>
    <g fill="#54575d" fontFamily="Liberation Sans, Arial, sans-serif" fontWeight="bold">
      <text x="2394" y="232" fontSize="9" transform="rotate(-14 2394 232)">FRONT</text>
      <text x="2430" y="222" fontSize="7" transform="rotate(18 2430 222)">RIGHT</text>
    </g>
  </Canvas>
);

export default function App() {
  return (
    <>
      <GlobalStyle />
      <Frame>
        <TitleBar>
          <Icon name="mep" />
          <TitleText>Revit MEP 2009 - [Ceiling Grid Test - 3D View: {'{3D}'}]</TitleText>
          <WinButtons>
            <WinButton aria-label="Minimize"><Icon name="min" size={12} /></WinButton>
            <WinButton aria-label="Maximize"><Icon name="max" size={12} /></WinButton>
            <WinButton $red aria-label="Close"><Icon name="close" size={12} /></WinButton>
          </WinButtons>
        </TitleBar>
        <MenuBar>
          <Icon name="rvt" />
          {['File', 'Edit', 'View', 'Modelling', 'Drafting', 'Tools', 'Settings', 'Window', 'Help'].map((m) => (
            <MenuItem key={m}>
              <u>{m[0]}</u>
              {m.slice(1)}
            </MenuItem>
          ))}
          <MdiButtons>
            <MdiButton aria-label="Minimize view"><Icon name="min" size={14} /></MdiButton>
            <MdiButton aria-label="Restore view"><Icon name="restore" size={14} /></MdiButton>
            <MdiButton aria-label="Close view"><Icon name="close" size={14} /></MdiButton>
          </MdiButtons>
        </MenuBar>
        <ToolbarRow>
          <Band $w={394}>
            <Gripper />
            <Tools items={['fresh', 'open', 'save', 'saveoff', 'print', '|', 'cut', 'copydoc', 'paste', 'del', '|', 'undo', 'drop', 'redo', 'dropoff', '|', '+browser', '|', 'help']} />
          </Band>
          <Band $w={217}>
            <Gripper />
            <Tools items={['wheel', 'drop', 'zoom', 'drop', '+thin', 'cube', 'house:3D']} />
          </Band>
          <Band $w={497}>
            <Gripper />
            <Tools items={['!move:Move', '!copy:Copy', '!rotate:Rotate', '!array:Array', '!mirror:Mirror', 'resize', '|', 'group:Group', 'pin', 'link']} />
          </Band>
          <Band>
            <Gripper />
            <SearchForm>
              <SearchInput type="text" placeholder="Content Search Online" aria-label="Content Search Online" />
              <SearchButton type="button" aria-label="Search"><Icon name="search" /></SearchButton>
            </SearchForm>
          </Band>
        </ToolbarRow>
        <ToolbarRow>
          <Band>
            <Gripper />
            <Tools
              items={[
                'plane:Plane', 'grid', '|', 'spell', '|', 'tape', 'dropper', 'paintpen', 'split1', 'split2', 'bucket', 'redbox', 'hatch', '|',
                'hammer:Demolish', '|', 'align:Align', 'cutline:Split', 'trim:Trim', 'offset:Offset', '|', 'join', 'unjoin', 'cutgeo',
                'uncutgeo', '|', 'corner', 'beams', 'wallend', '|', 'dims',
              ]}
            />
          </Band>
        </ToolbarRow>
        <OptionsBar>
          <ComboWrap>
            <Combo disabled aria-label="Type selector" />
            <ComboArrow><Icon name="chev" size={12} /></ComboArrow>
          </ComboWrap>
          <RaisedButton $w={33} aria-label="Properties"><Icon name="props" /></RaisedButton>
          <OptionSep />
          <CheckLabel>
            <Check type="checkbox" defaultChecked />
            Press + Drag
          </CheckLabel>
          <RaisedButton $w={29} aria-label="Filter"><Icon name="funnel" /></RaisedButton>
        </OptionsBar>
        <Work>
          <Palette>
            <PaletteTab>Basics</PaletteTab>
            <PaletteTools>
              {paletteTools.map(([icon, label, off]) => (
                <li key={label}>
                  <PaletteTool $on={label === 'Modify'} $off={off} disabled={off}>
                    <Icon name={icon} />
                    {label}
                  </PaletteTool>
                </li>
              ))}
            </PaletteTools>
            {['View', 'Architectural', 'Drafting', 'Rendering', 'Structural', 'Electrical', 'Piping', 'Plumbing', 'Fire Protection'].map((t) => (
              <PaletteTab key={t}>{t}</PaletteTab>
            ))}
          </Palette>
          <Browser>
            <BrowserTitle>
              Ceiling Grid Test - Project browser
              <BrowserClose aria-label="Close browser"><Icon name="close" size={10} /></BrowserClose>
            </BrowserTitle>
            <Tree>
              <TreeNodes nodes={tree} />
            </Tree>
          </Browser>
          <ViewPane>
            <Scene />
            <Scroll $vertical>
              <ScrollPart aria-label="Scroll up"><Icon name="up" size={13} /></ScrollPart>
              <ScrollPart aria-label="Vertical position" />
              <ScrollPart aria-label="Scroll down"><Icon name="down" size={13} /></ScrollPart>
            </Scroll>
            <ViewFooter>
              <ViewControls>
                <Scale>1/8" = 1'-0"</Scale>
                {['detaillevel', 'shaded', 'shadow', 'teapot', 'crop', 'cropshow', 'glasses', 'bulb'].map((n) => (
                  <ViewControl key={n} aria-label={n}><Icon name={n} /></ViewControl>
                ))}
              </ViewControls>
              <Scroll>
                <ScrollPart aria-label="Scroll left"><Icon name="left" size={13} /></ScrollPart>
                <ScrollPart aria-label="Horizontal position" />
                <ScrollPart aria-label="Scroll right"><Icon name="right" size={13} /></ScrollPart>
              </Scroll>
            </ViewFooter>
            <SizeGrip />
          </ViewPane>
        </Work>
        <StatusBar>
          <StatusText>Click to select, TAB for alternates, CTRL adds, SHIFT unselects.</StatusText>
          <StatusPart $w={28} />
          <StatusPart $w={30}>NUM</StatusPart>
          <StatusPart $w={32} />
          <StatusPart $w={97} $dark><Icon name="bluefunnel" />:0</StatusPart>
          <StatusPart $w={32} $dark><Icon name="comm" /></StatusPart>
          <SizeGrip />
        </StatusBar>
      </Frame>
    </>
  );
}
